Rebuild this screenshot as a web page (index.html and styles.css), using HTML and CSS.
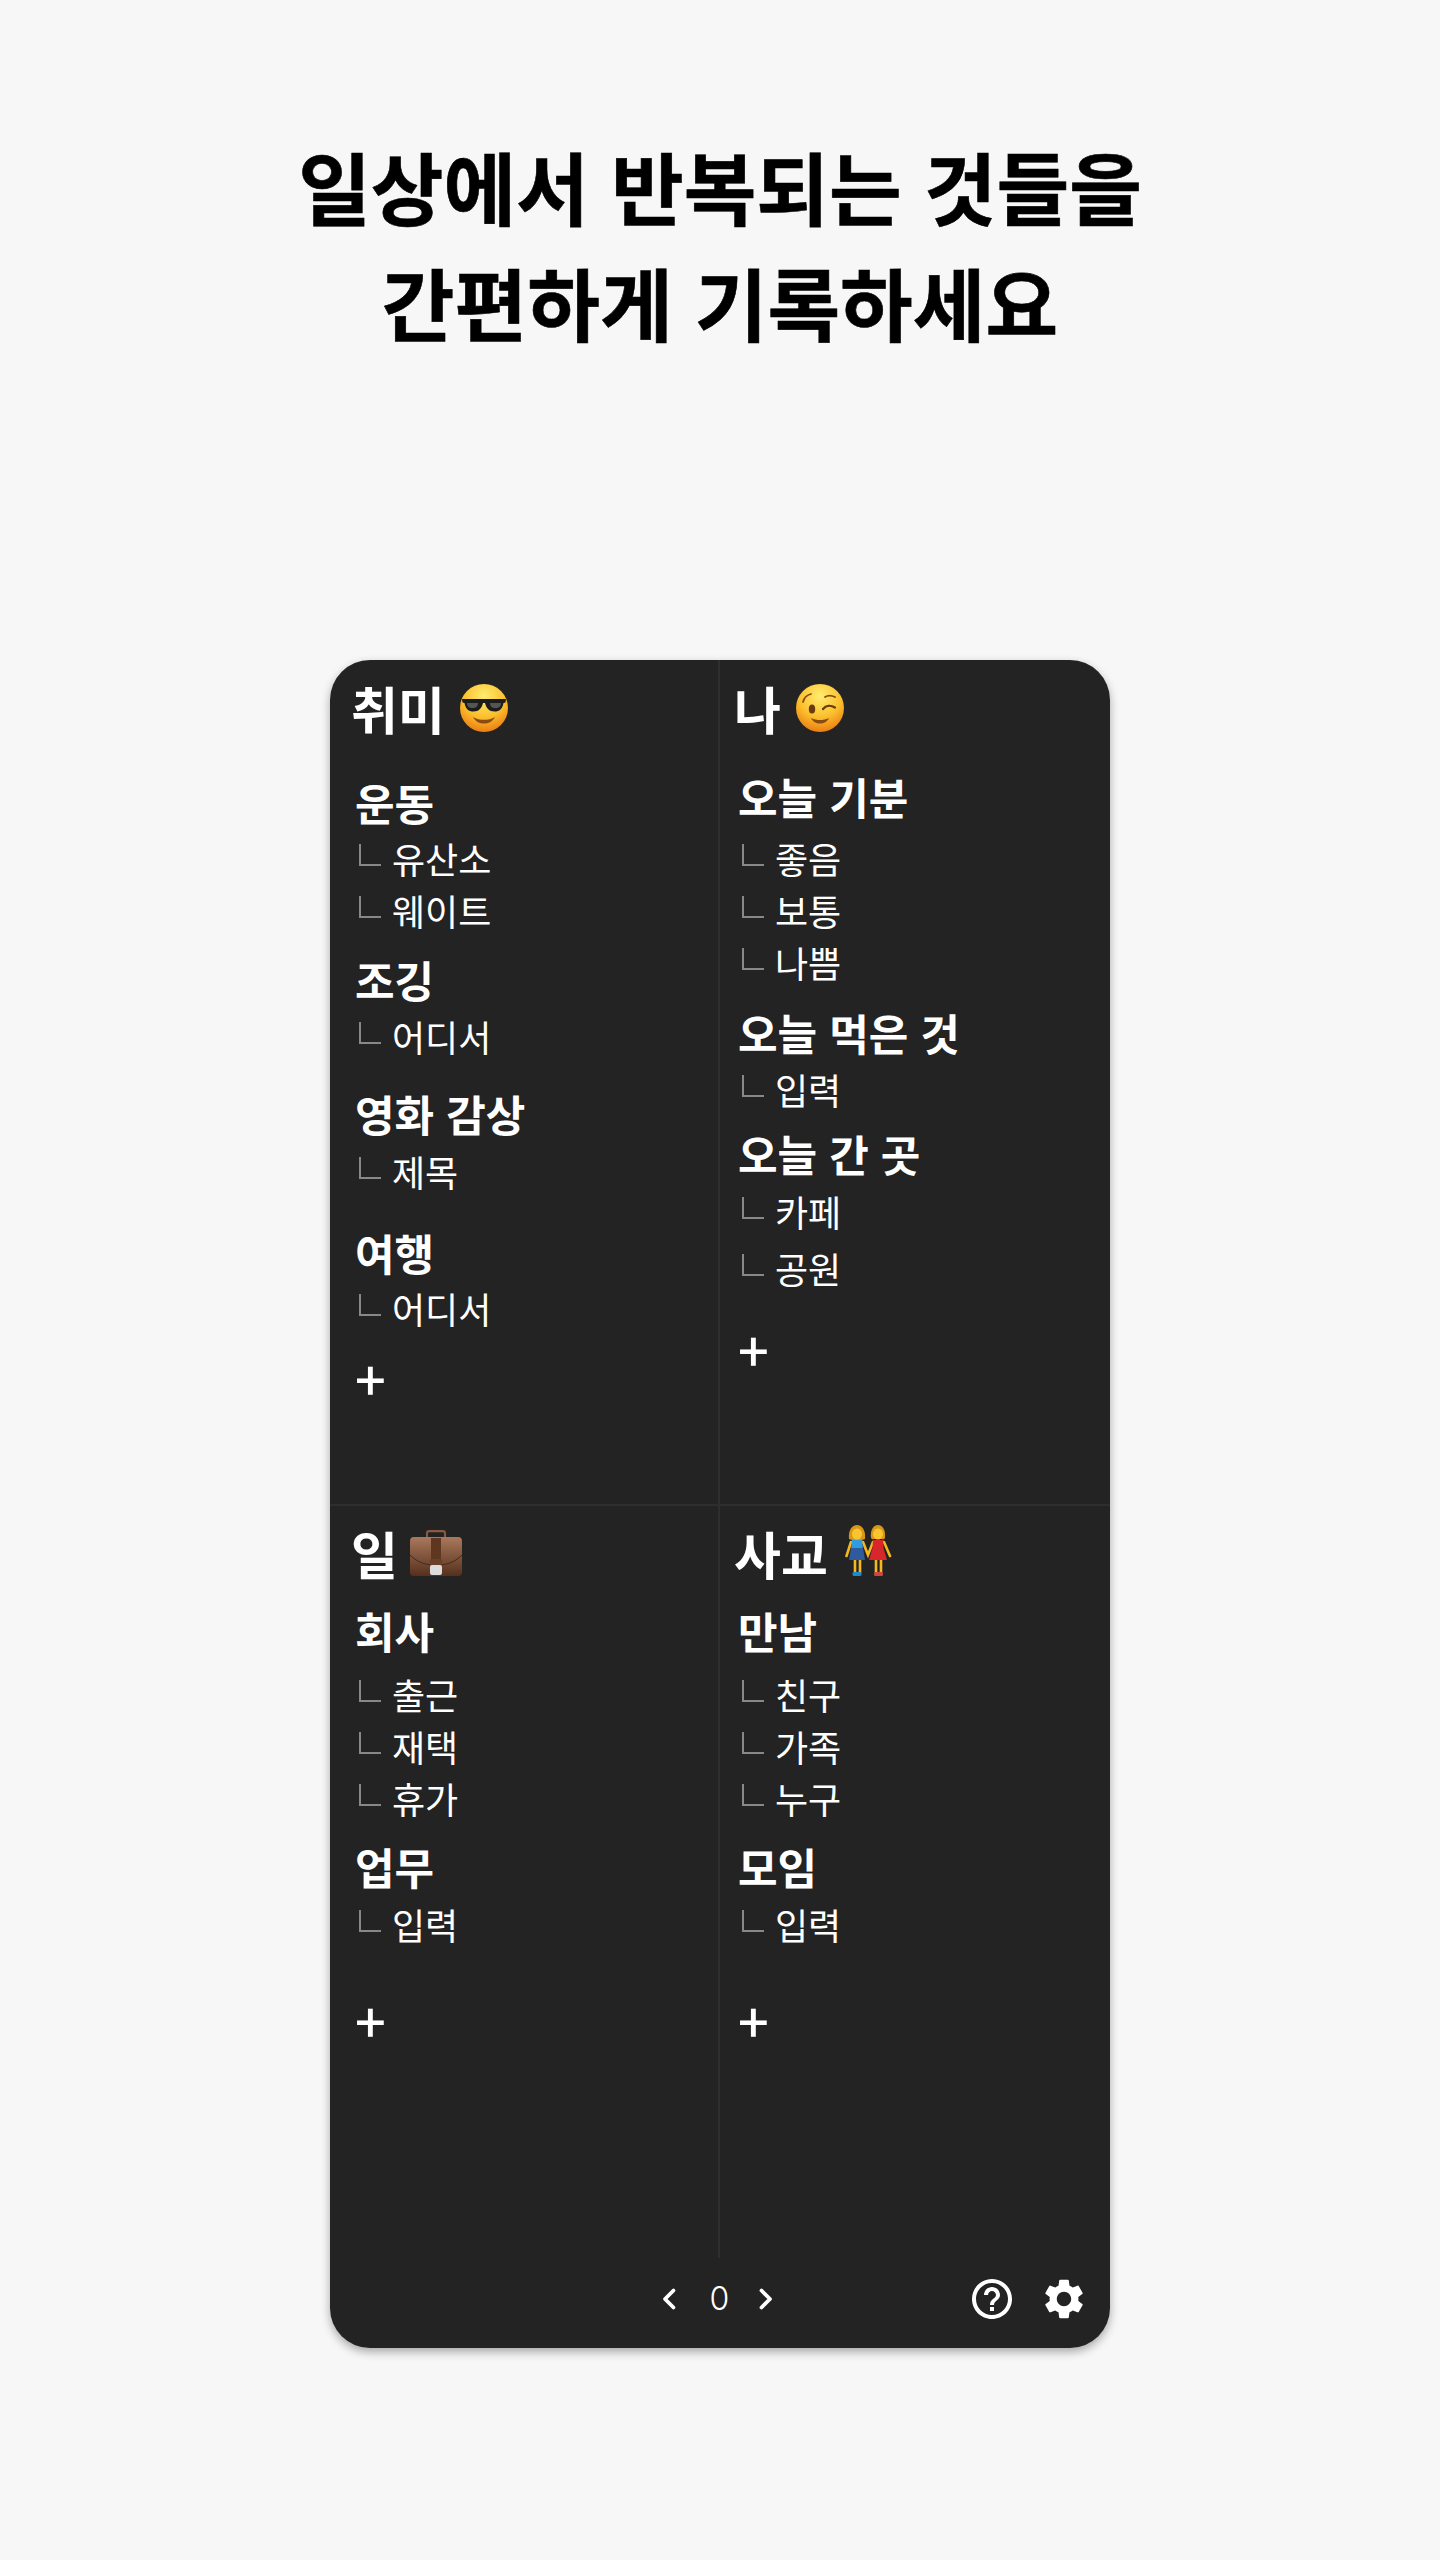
FILE: index.html
```html
<!DOCTYPE html>
<html lang="ko">
<head>
<meta charset="utf-8">
<title>기록</title>
<link rel="stylesheet" href="styles.css">
</head>
<body>
<main class="page">
  <h1 class="headline">일상에서 반복되는 것들을<br>간편하게 기록하세요</h1>
  <section class="card">
    <div class="board">
      <div class="cell cell-a">
        <h2 class="sec">취미 <svg class="emo" viewBox="0 0 48 48"><defs><radialGradient id="f1" cx="50%" cy="25%" r="80%"><stop offset="0" stop-color="#ffec70"/><stop offset=".55" stop-color="#fbc02d"/><stop offset="1" stop-color="#e8730f"/></radialGradient></defs><circle cx="24" cy="24" r="24" fill="url(#f1)"/><path d="M2 15h44l-.5 3.500-2 .5c-1 6-4 8.500-9 8.500-5.500 0-8-3-9.500-8.500h-2C21.500 24.500 19 27.500 13.500 27.500c-5 0-8-2.500-9-8.500l-2-.5z" fill="#1c1c1c"/><path d="M7 19h11c0 3-1.500 5-5.500 5S7 22 7 19zM30 19h11c0 3-1.500 5-5.500 5S30 22 30 19z" fill="#555"/><path d="M13 33c3 5 6.500 6.500 11 6.500S32 38 35 33c-3 2-7 2.800-11 2.800S16 35 13 33z" fill="#8a4a12"/></svg></h2>
        <div class="grp first"><h3 class="ttl">운동</h3><p class="itm">유산소</p><p class="itm">웨이트</p></div>
        <div class="grp m-13 slight"><h3 class="ttl">조깅</h3><p class="itm">어디서</p></div>
        <div class="grp m-21 loose"><h3 class="ttl">영화 감상</h3><p class="itm">제목</p></div>
        <div class="grp m-25"><h3 class="ttl">여행</h3><p class="itm">어디서</p></div>
        <div class="add add-a">+</div>
      </div>
      <div class="cell cell-b">
        <h2 class="sec">나 <svg class="emo" viewBox="0 0 48 48"><defs><radialGradient id="f2" cx="50%" cy="25%" r="80%"><stop offset="0" stop-color="#ffec70"/><stop offset=".55" stop-color="#fbc02d"/><stop offset="1" stop-color="#e8730f"/></radialGradient></defs><circle cx="24" cy="24" r="24" fill="url(#f2)"/><ellipse cx="16" cy="25" rx="3.200" ry="4.500" fill="#6b3a0c"/><path d="M7 18c1-4 4-7 8-8" fill="none" stroke="#8a4a12" stroke-width="1.800" stroke-linecap="round"/><path d="M29 13c3-2 7-1.500 10 0" fill="none" stroke="#8a4a12" stroke-width="1.800" stroke-linecap="round"/><path d="M27 25c3-4 8-4 12-1.500" fill="none" stroke="#6b3a0c" stroke-width="2.200" stroke-linecap="round"/><path d="M15 34c2 4 5 5.500 9 5.500s7-1.500 9-5.500c-3 1.500-6 2-9 2s-6-.5-9-2z" fill="#8a4a12"/></svg></h2>
        <div class="grp first-b"><h3 class="ttl">오늘 기분</h3><p class="itm">좋음</p><p class="itm">보통</p><p class="itm">나쁨</p></div>
        <div class="grp m-14 slight"><h3 class="ttl">오늘 먹은 것</h3><p class="itm">입력</p></div>
        <div class="grp m-8 loose"><h3 class="ttl">오늘 간 곳</h3><p class="itm">카페</p><p class="itm itm-far">공원</p></div>
        <div class="add add-b">+</div>
      </div>
      <div class="cell cell-c">
        <h2 class="sec">일 <svg class="emo bag" viewBox="0 0 52 48"><defs><linearGradient id="b1" x1="0" y1="0" x2="0" y2="1"><stop offset="0" stop-color="#a9795c"/><stop offset="1" stop-color="#56301d"/></linearGradient></defs><path d="M16 9V4c0-2 1-3 3-3h14c2 0 3 1 3 3v5h-2V4.500c0-.8-.5-1.300-1.300-1.300H19.300c-.8 0-1.300.5-1.300 1.300V9z" fill="#8a5b40"/><rect x="0" y="8" width="52" height="39" rx="4" fill="url(#b1)"/><path d="M0 26c8 8 16 10 26 10s18-2 26-10" fill="none" stroke="#4a2816" stroke-width="1"/><rect x="21" y="9" width="10" height="22" fill="#5f3720"/><rect x="20" y="30" width="12" height="7" rx="2" fill="#6b4029"/><rect x="20" y="36" width="12" height="10" rx="2" fill="#dcdcdc"/></svg></h2>
        <div class="grp first-c"><h3 class="ttl">회사</h3><p class="itm">출근</p><p class="itm">재택</p><p class="itm">휴가</p></div>
        <div class="grp m-12 loose"><h3 class="ttl">업무</h3><p class="itm">입력</p></div>
        <div class="add add-c">+</div>
      </div>
      <div class="cell cell-d">
        <h2 class="sec">사교 <svg class="emo duo" viewBox="0 0 47 51"><g fill="none" stroke="#f5b81c" stroke-width="2.600" stroke-linecap="round"><path d="M6 17L1.500 31M18 17l5 13 5-13M39 17l6 14"/><path d="M10 34v14M15 34v14M31 34v14M36 34v14"/></g><path d="M4 14C3 4 8 0 12 0s9 4 8 14c-2 1-4 1-8 1s-6 0-8-1z" fill="#d9971a"/><path d="M26 13c-1-9 3-13 7-13s8 4 7 13c-1 1.500-2 1.500-3 1H29c-1 .5-2 .5-3-1z" fill="#d9971a"/><ellipse cx="12" cy="9" rx="5" ry="5.500" fill="#f9c52e"/><ellipse cx="33" cy="9" rx="5" ry="5.500" fill="#f9c52e"/><path d="M7 15h10l1 9H6z" fill="#2f9be0"/><path d="M6 23h12l2 12H4z" fill="#2f5b9e"/><path d="M28 15h10l.5 8 3.500 12H24l3.500-12z" fill="#d7262c"/><rect x="7.500" y="47" width="9" height="4" rx="1.500" fill="#1e88d0"/><rect x="29" y="47" width="9" height="4" rx="1.500" fill="#d0453e"/></svg></h2>
        <div class="grp first-c"><h3 class="ttl">만남</h3><p class="itm">친구</p><p class="itm">가족</p><p class="itm">누구</p></div>
        <div class="grp m-12 loose"><h3 class="ttl">모임</h3><p class="itm">입력</p></div>
        <div class="add add-c">+</div>
      </div>
    </div>
    <footer class="foot">
      <div class="pager">
        <svg class="chev" viewBox="0 0 16 24"><path d="M12.500 3.500L4 12l8.500 8.500"/></svg>
        <span class="num">0</span>
        <svg class="chev" viewBox="0 0 16 24"><path d="M3.500 3.500L12 12l-8.500 8.500"/></svg>
      </div>
      <div class="actions">
        <svg class="act" viewBox="0 0 24 24"><path d="M11 18h2v-2h-2v2zm1-16C6.480 2 2 6.480 2 12s4.480 10 10 10 10-4.480 10-10S17.520 2 12 2zm0 18c-4.410 0-8-3.590-8-8s3.590-8 8-8 8 3.590 8 8-3.590 8-8 8zm0-14c-2.210 0-4 1.790-4 4h2c0-1.100.9-2 2-2s2 .9 2 2c0 2-3 1.750-3 5h2c0-2.250 3-2.500 3-5 0-2.210-1.790-4-4-4z"/></svg>
        <svg class="act" viewBox="0 0 24 24"><path d="M19.140 12.940c.04-.3.06-.61.06-.94 0-.32-.02-.64-.07-.94l2.030-1.580c.18-.14.23-.41.12-.61l-1.920-3.320c-.12-.22-.37-.29-.59-.22l-2.390.96c-.5-.38-1.030-.7-1.620-.94l-.36-2.540c-.04-.24-.24-.41-.48-.41h-3.840c-.24 0-.43.17-.47.41l-.36 2.540c-.59.24-1.130.57-1.620.94l-2.390-.96c-.22-.08-.47 0-.59.22L2.740 8.870c-.12.21-.08.47.12.61l2.030 1.580c-.05.3-.09.63-.09.94s.02.64.07.94l-2.030 1.580c-.18.14-.23.41-.12.61l1.920 3.320c.12.22.37.29.59.22l2.390-.96c.5.38 1.030.7 1.620.94l.36 2.540c.05.24.24.41.48.41h3.840c.24 0 .44-.17.47-.41l.36-2.540c.59-.24 1.130-.56 1.620-.94l2.390.96c.22.08.47 0 .59-.22l1.920-3.320c.12-.22.07-.47-.12-.61l-2.010-1.580zM12 15.600c-1.980 0-3.600-1.620-3.600-3.600s1.620-3.600 3.600-3.600 3.600 1.620 3.600 3.600-1.620 3.600-3.600 3.600z"/></svg>
      </div>
    </footer>
  </section>
</main>
</body>
</html>
```
FILE: styles.css
```css
* { box-sizing: border-box; margin: 0; padding: 0; }
html, body { background: #f7f7f7; }
body { font-family: "Noto Sans CJK KR", "Noto Sans", sans-serif; color: #fff; }
.page { display: flex; flex-direction: column; align-items: center; height: 2560px; padding-top: 128px; }
.headline { color: #000; font-size: 79px; font-weight: 700; line-height: 116px; text-align: center; height: 532px; -webkit-text-stroke: .6px #000; }
.card { width: 780px; height: 1688px; background: #232323; border-radius: 40px; box-shadow: 0 4px 10px rgba(0,0,0,.32); overflow: hidden; display: flex; flex-direction: column; }
.board { display: grid; grid-template-columns: 390px 390px; grid-template-rows: 846px 752px; height: 1598px; }
.cell { padding: 12px 0 0 25px; }
.cell-a, .cell-c { border-right: 2px solid #2e2e2e; }
.cell-b, .cell-d { padding-left: 18px; }
.cell-a, .cell-b { border-bottom: 2px solid #2e2e2e; }
.cell-c, .cell-d { padding-top: 11px; }
.sec { display: flex; align-items: center; gap: 15px; font-size: 51px; font-weight: 700; line-height: 72px; height: 72px; margin-left: -4px; }
.emo { width: 48px; height: 48px; flex: none; }
.bag { width: 52px; margin-left: -3px; }
.duo { width: 47px; height: 51px; margin-left: 2px; margin-top: -5px; }
.ttl { font-size: 43px; font-weight: 700; line-height: 60px; height: 60px; }
.itm { position: relative; font-size: 36px; font-weight: 400; line-height: 52px; height: 52px; padding-left: 37px; }
.itm::before { content: ""; position: absolute; left: 4px; top: 12px; width: 20px; height: 20px; border-left: 2px solid #888; border-bottom: 2px solid #888; }
.itm-far { margin-top: 5px; }
.first { margin-top: 28px; }
.first-b { margin-top: 22px; }
.first-b .ttl { margin-bottom: 6px; }
.first-c { margin-top: 11px; }
.first-c .ttl { margin-bottom: 8px; }
.loose .ttl { margin-bottom: 2px; }
.slight .ttl { margin-bottom: 1px; }
.m-8 { margin-top: 8px; }
.m-12 { margin-top: 12px; }
.m-13 { margin-top: 13px; }
.m-14 { margin-top: 14px; }
.m-21 { margin-top: 21px; }
.m-25 { margin-top: 25px; }
.add { font-size: 54px; font-weight: 500; line-height: 60px; height: 60px; }
.add-a { margin-top: 14px; }
.add-b { margin-top: 25px; }
.add-c { margin-top: 40px; }
.foot { flex: 1; display: grid; grid-template-columns: 1fr auto 1fr; align-items: center; padding-bottom: 8px; }
.pager { grid-column: 2; display: flex; align-items: center; margin-right: 6px; }
.num { font-family: Inter, "Noto Sans", sans-serif; font-size: 32px; font-weight: 300; line-height: 48px; width: 22px; text-align: center; margin: 0 27px 0 32px; }
.chev { width: 16px; height: 24px; fill: none; stroke: #fff; stroke-width: 3.800; stroke-linecap: round; stroke-linejoin: round; }
.actions { grid-column: 3; justify-self: end; display: flex; gap: 24px; padding-right: 22px; }
.act { width: 48px; height: 48px; fill: #fff; }
```
